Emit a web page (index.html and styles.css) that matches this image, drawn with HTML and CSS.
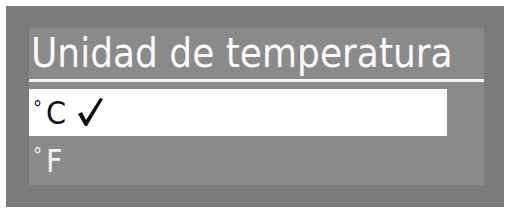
FILE: index.html
```html
<!DOCTYPE html>
<html lang="es">
<head>
    <meta charset="UTF-8">
    <title>Unidad de temperatura</title>
    <link rel="stylesheet" href="styles.css">
</head>
<body>
    <div class="frame">
        <div class="panel">
            <div class="panel-header">
                <h2>Unidad de temperatura</h2>
            </div>
            <ul class="options">
                <li class="option selected">
                    <span class="deg">°</span>C
                    <svg class="check" width="26" height="32" viewBox="0 0 26 32">
                        <path d="M0 17 L4 15 L8 23 L22 1 L25 2 L9 29 L7 29 Z" fill="#111"/>
                    </svg>
                </li>
                <li class="option">
                    <span class="deg">°</span>F
                </li>
            </ul>
        </div>
    </div>
</body>
</html>
```

FILE: styles.css
```css
* {
    padding: 0;
    margin: 0;
}
body {
    background-color: #fff;
    font-family: "DejaVu Sans Condensed", "DejaVu Sans", sans-serif;
}
.frame {
    width: 498px;
    height: 201px;
    margin: 6px 0 0 6px;
    padding: 22px 20px 0 23px;
    box-sizing: border-box;
    background-color: #7b7b7b;
}
.panel {
    width: 455px;
    height: 157px;
    background-color: #8a8a8a;
}
.panel-header {
    height: 51px;
    border-bottom: 3px solid #f4f4f4;
}
.panel-header h2 {
    font-weight: normal;
    font-size: 40px;
    line-height: 51px;
    color: #fafafa;
    padding-left: 2px;
    white-space: nowrap;
}
.options {
    list-style-type: none;
    padding-top: 7px;
}
.option {
    height: 49px;
    width: 414px;
    display: flex;
    align-items: center;
    padding-left: 4px;
    font-size: 32px;
    color: #f2f2f2;
}
.option.selected {
    height: 47px;
    background-color: #fff;
    color: #111;
}
.deg {
    font-size: 20px;
    align-self: flex-start;
    margin-top: 7px;
    margin-right: 4px;
}
.check {
    margin-left: 12px;
}
```
